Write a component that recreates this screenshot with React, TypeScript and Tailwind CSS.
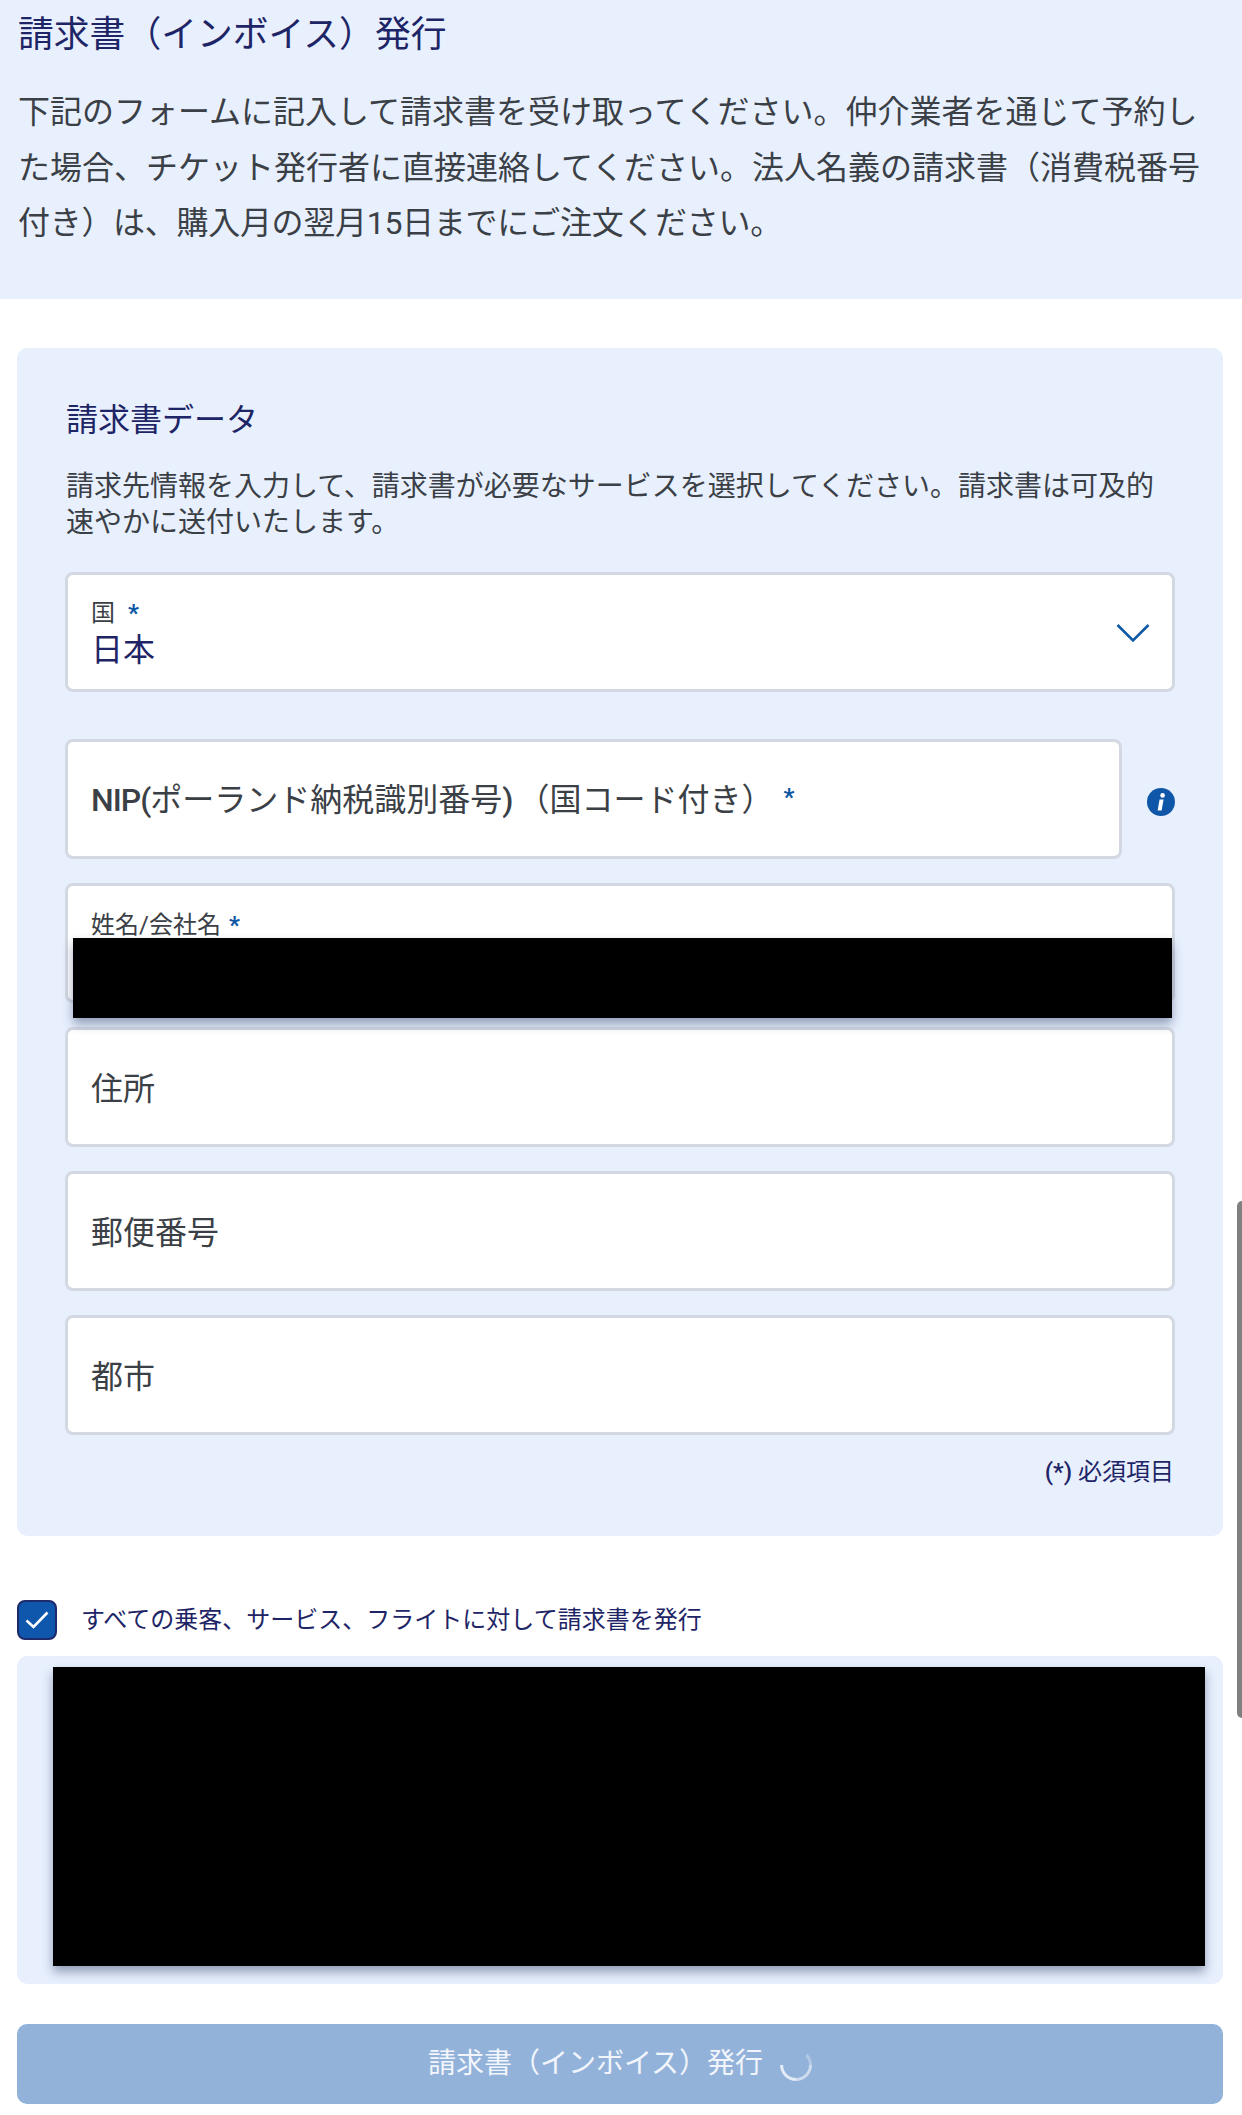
const font = "font-['Roboto','Noto_Sans_CJK_JP',sans-serif]";

function PlainField({ label }: { label: string }) {
  return (
    <div className="mt-[24px] h-[120px] rounded-[8px] border-[3px] border-[#d4d8e2] bg-white pl-[23px] pt-[4px] flex items-center text-[32px] text-[#3b3f46]">
      {label}
    </div>
  );
}

export default function App() {
  return (
    <div className={`relative w-[1242px] h-[2115px] overflow-hidden bg-white ${font}`}>
      {/* Header */}
      <div className="h-[299px] bg-[#e8f0fe] pl-[18px] pr-[18px]">
        <h1 className="pt-[11px] text-[35.8px] leading-[48px] font-normal text-[#1e2566]">請求書（インボイス）発行</h1>
        <p className="mt-[26px] text-[32px] leading-[55.5px] text-[#3b3f46]">
          <span className="block">下記のフォームに記入して請求書を受け取ってください。仲介業者を通じて予約し</span>
          <span className="block">た場合、チケット発行者に直接連絡してください。法人名義の請求書（消費税番号</span>
          <span className="block tracking-[-0.3px]">付き）は、購入月の翌月15日までにご注文ください。</span>
        </p>
      </div>

      <div className="pl-[17px] pr-[19px]">
        {/* Billing data */}
        <div className="mt-[49px] h-[1188px] rounded-[10px] bg-[#e8f0fe] px-[48px] pt-[50px]">
          <h2 className="pl-[1px] text-[32px] leading-[44px] font-normal text-[#1e2566]">請求書データ</h2>
          <p className="mt-[27px] pl-[1px] text-[28px] leading-[36px] text-[#3b3f46]">
            請求先情報を入力して、請求書が必要なサービスを選択してください。請求書は可及的速やかに送付いたします。
          </p>

          <div className="mt-[31px] relative h-[120px] rounded-[8px] border-[3px] border-[#d4d8e2] bg-white pl-[23px] pt-[23px]">
            <div className="text-[24px] leading-[30px] text-[#3b3f46]">
              国<span className="font-bold text-[#0b57a4] ml-[13px]">*</span>
            </div>
            <div className="mt-[1px] text-[32px] leading-[42px] text-[#1e2566]">日本</div>
            <svg className="absolute right-[22px] top-[48px] w-[34px] h-[20px]" viewBox="0 0 34 20" fill="none">
              <path d="M1.5 2 L17 17.5 L32.5 2" stroke="#0f5aa8" strokeWidth="2.6" />
            </svg>
          </div>

          <div className="mt-[47px] flex items-center">
            <div className="w-[1058px] h-[120px] rounded-[8px] border-[3px] border-[#d4d8e2] bg-white pl-[23px] pt-[2px] flex items-center text-[32px] text-[#3b3f46]">
              <span className="font-medium tracking-[-1px]">NIP(</span>ポーランド納税識別番号<span className="font-medium mr-[4px]">)</span>（国コード付き）
              <span className="text-[24px] font-bold text-[#0b57a4] ml-[10px] -mt-[6px]">*</span>
            </div>
            <svg className="ml-[25px] mt-[6px] w-[28px] h-[28px]" viewBox="0 0 28 28">
              <circle cx="14" cy="14" r="14" fill="#0f56a8" />
              <circle cx="15.6" cy="7.4" r="2.3" fill="#fff" />
              <path d="M12.6 11.6 H16.6 L14.6 22.4 H10.6 Z" fill="#fff" />
            </svg>
          </div>

          <div className="mt-[24px] h-[120px] rounded-[8px] border-[3px] border-[#d4d8e2] bg-white pl-[23px] pt-[23px]">
            <div className="text-[24px] leading-[32px] text-[#3b3f46]">
              姓名/会社名<span className="font-bold text-[#0b57a4] ml-[8px]">*</span>
            </div>
          </div>

          <PlainField label="住所" />
          <PlainField label="郵便番号" />
          <PlainField label="都市" />

          <div className="mt-[19px] pr-[1px] text-right text-[24px] leading-[36px] text-[#1e2566]">
            <span className="font-medium">(*)</span> 必須項目
          </div>
        </div>

        {/* All passengers */}
        <div className="mt-[64px] flex items-center h-[40px]">
          <div className="w-[40px] h-[40px] rounded-[8px] border-[2px] border-[#1e2a6b] bg-[#0f56ad] flex items-center justify-center">
            <svg className="w-[24px] h-[20px]" viewBox="0 0 24 20" fill="none">
              <path d="M1.5 10.5 L8.5 17 L22.5 2.5" stroke="#fff" strokeWidth="2.6" />
            </svg>
          </div>
          <span className="ml-[24px] text-[24px] text-[#1e2566]">すべての乗客、サービス、フライトに対して請求書を発行</span>
        </div>

        <div className="mt-[16px] h-[328px] rounded-[10px] bg-[#e8f0fe] pl-[36px] pr-[18px] pt-[11px]">
          <div className="h-[299px] bg-black shadow-[0_6px_10px_rgba(40,60,100,0.45)]" />
        </div>

        {/* Submit */}
        <button className="mt-[40px] w-full h-[80px] rounded-[10px] bg-[#93b2d9] flex items-center justify-center text-[28px] text-[#f2f6fc]">
          請求書（インボイス）発行
          <svg className="ml-[17px] mt-[2px] w-[32px] h-[32px]" viewBox="0 0 32 32" fill="none">
            <path d="M1.6 16 A14.5 14.5 0 0 0 16 30.5" stroke="#fff" strokeOpacity="0.75" strokeWidth="3" />
            <path d="M16 30.5 A14.5 14.5 0 0 0 30.5 16" stroke="#fff" strokeOpacity="0.55" strokeWidth="3" />
            <path d="M30.5 16 A14.5 14.5 0 0 0 26.5 6" stroke="#fff" strokeOpacity="0.3" strokeWidth="3" />
          </svg>
        </button>
      </div>

      {/* Masked field value */}
      <div className="absolute left-[73px] top-[938px] w-[1099px] h-[80px] bg-black shadow-[0_6px_10px_rgba(40,60,100,0.45)]" />

      {/* Scrollbar */}
      <div className="absolute right-0 top-[1201px] w-[5px] h-[517px] rounded-l-[5px] bg-[#808080]" />
    </div>
  );
}
